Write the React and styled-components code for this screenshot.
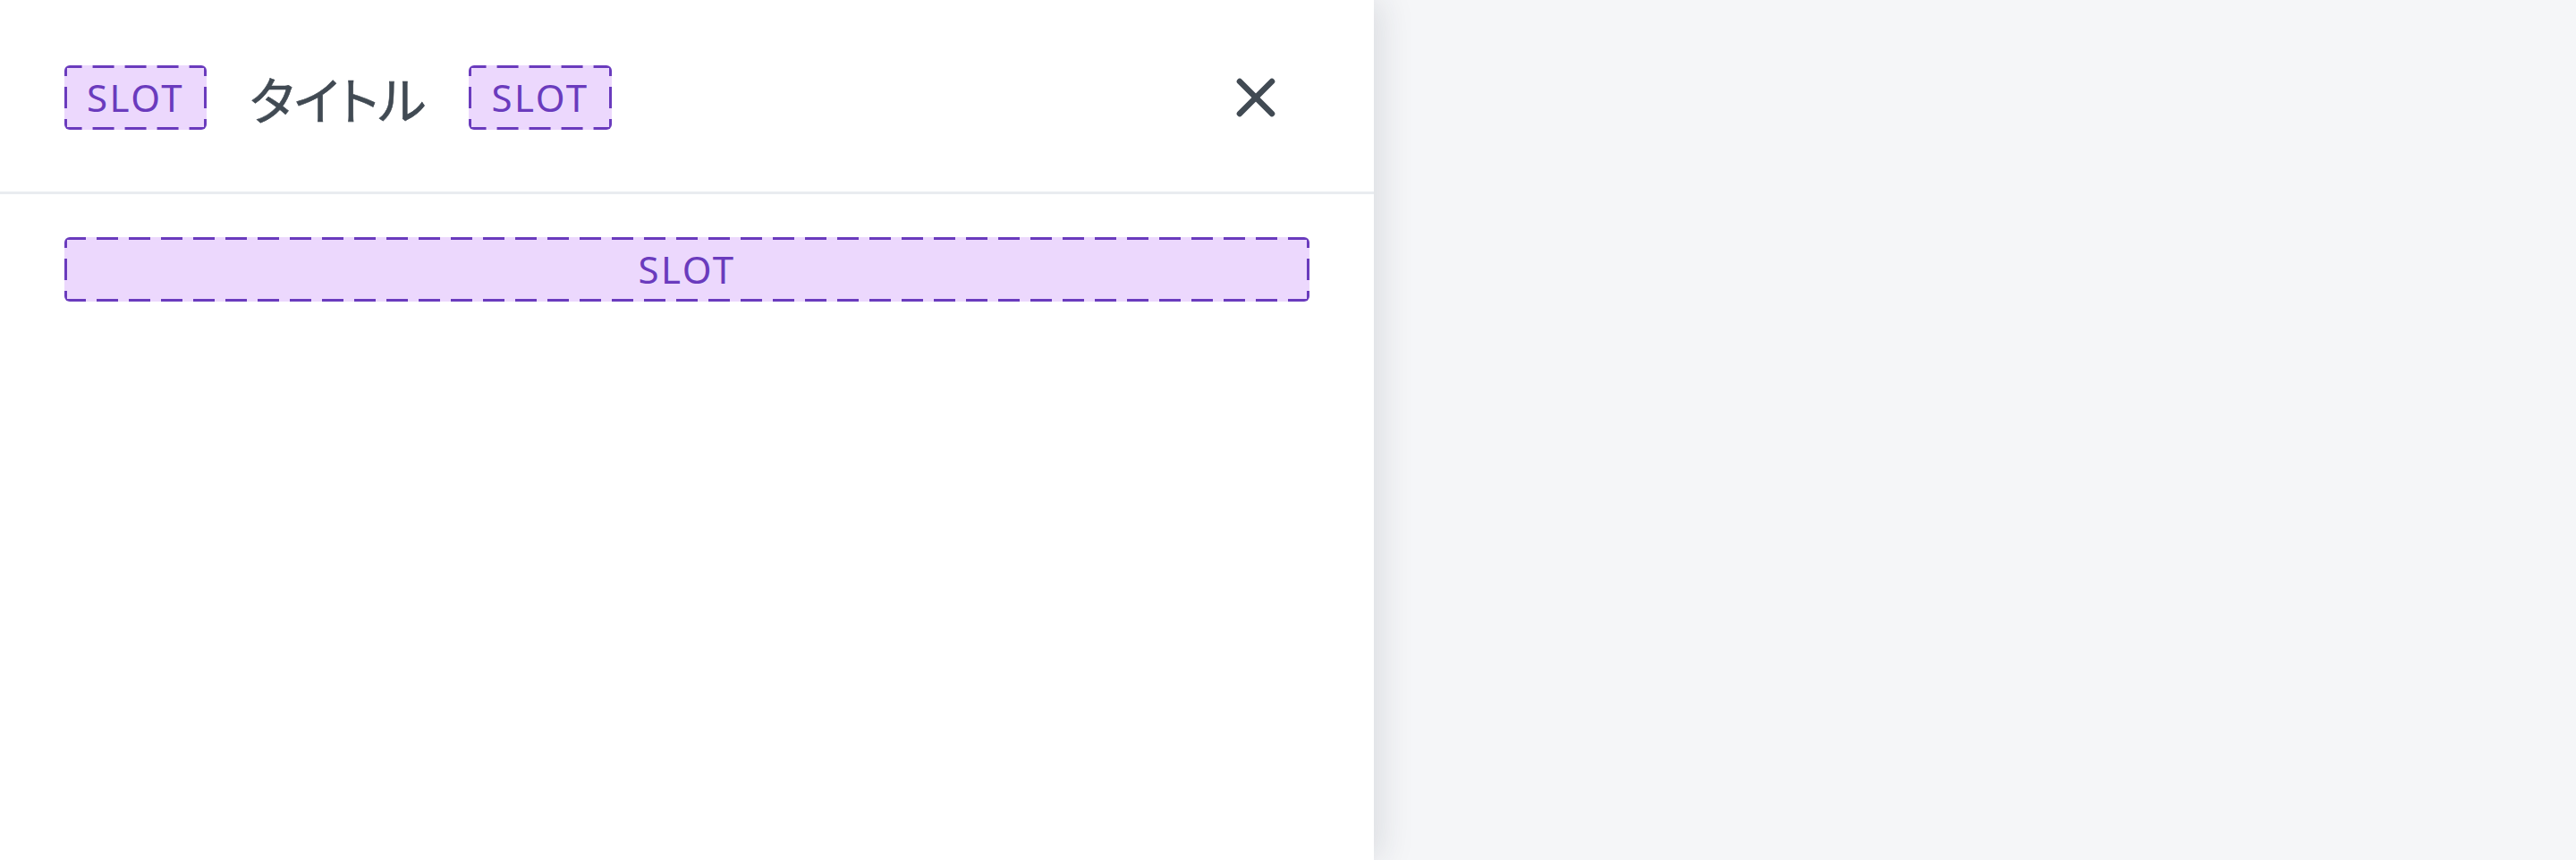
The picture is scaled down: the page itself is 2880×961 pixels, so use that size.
import React from "react";
import styled, { createGlobalStyle } from "styled-components";
import { X } from "lucide-react";

const GlobalStyle = createGlobalStyle`
  html, body {
    margin: 0;
    padding: 0;
    background-color: #f5f6f8;
  }
  body {
    font-family: "Noto Sans", "Noto Sans CJK JP", sans-serif;
  }
`;

const slotLine = "#6a3bbd";
const slotFill = "#ecd8fd";

const Page = styled.div`
  display: flex;
  height: 961px;
  overflow: hidden;
`;

const Drawer = styled.aside`
  display: flex;
  flex-direction: column;
  width: 1536px;
  height: 100%;
  background-color: #ffffff;
  box-shadow: 8px 0 36px rgba(30, 40, 60, 0.12);
  position: relative;
  z-index: 1;
`;

const Header = styled.header`
  display: flex;
  align-items: center;
  gap: 48px;
  height: 217px;
  padding: 4px 72px 0;
  box-sizing: border-box;
  border-bottom: 3px solid #e9ecf0;
`;

const Title = styled.h2`
  margin: 0;
  font-family: "Noto Sans CJK JP", sans-serif;
  font-feature-settings: "palt";
  font-size: 57px;
  font-weight: 400;
  line-height: 1;
  color: #414a53;
  -webkit-text-stroke: 0.6px #414a53;
`;

// dashed frame drawn with gradients so the dash rhythm is 24 on / 12 off
const Slot = styled.div`
  display: flex;
  align-items: center;
  justify-content: center;
  box-sizing: border-box;
  height: 72px;
  padding: 0 ${({ $wide }) => ($wide ? "0" : "25px")};
  width: ${({ $wide }) => ($wide ? "100%" : "auto")};
  border-radius: 6px;
  background:
    linear-gradient(to right, transparent 6px, ${slotLine} 6px, ${slotLine} 30px, transparent 30px) 50% 0 / 36px 3px repeat-x,
    linear-gradient(to right, transparent 6px, ${slotLine} 6px, ${slotLine} 30px, transparent 30px) 50% 100% / 36px 3px repeat-x,
    linear-gradient(to bottom, transparent 6px, ${slotLine} 6px, ${slotLine} 30px, transparent 30px) 0 50% / 3px 36px repeat-y,
    linear-gradient(to bottom, transparent 6px, ${slotLine} 6px, ${slotLine} 30px, transparent 30px) 100% 50% / 3px 36px repeat-y,
    ${slotFill};
  color: ${slotLine};
  font-family: "Noto Sans", sans-serif;
  font-size: 42px;
  font-weight: 400;
  letter-spacing: 2.5px;
  line-height: 1;
`;

const Spacer = styled.div`
  flex: 1;
`;

const CloseButton = styled.button`
  display: flex;
  align-items: center;
  justify-content: center;
  padding: 24px;
  border: none;
  background: transparent;
  color: #414a53;
  cursor: pointer;
`;

const Body = styled.div`
  display: flex;
  flex-direction: column;
  padding: 48px 72px;
`;

const Backdrop = styled.div`
  flex: 1;
  background-color: #f5f6f8;
`;

export default function App() {
  return (
    <>
      <GlobalStyle />
      <Page>
        <Drawer>
          <Header>
            <Slot>SLOT</Slot>
            <Title>タイトル</Title>
            <Slot>SLOT</Slot>
            <Spacer />
            <CloseButton aria-label="閉じる">
              <X size={72} strokeWidth={2.2} />
            </CloseButton>
          </Header>
          <Body>
            <Slot $wide>SLOT</Slot>
          </Body>
        </Drawer>
        <Backdrop />
      </Page>
    </>
  );
}
